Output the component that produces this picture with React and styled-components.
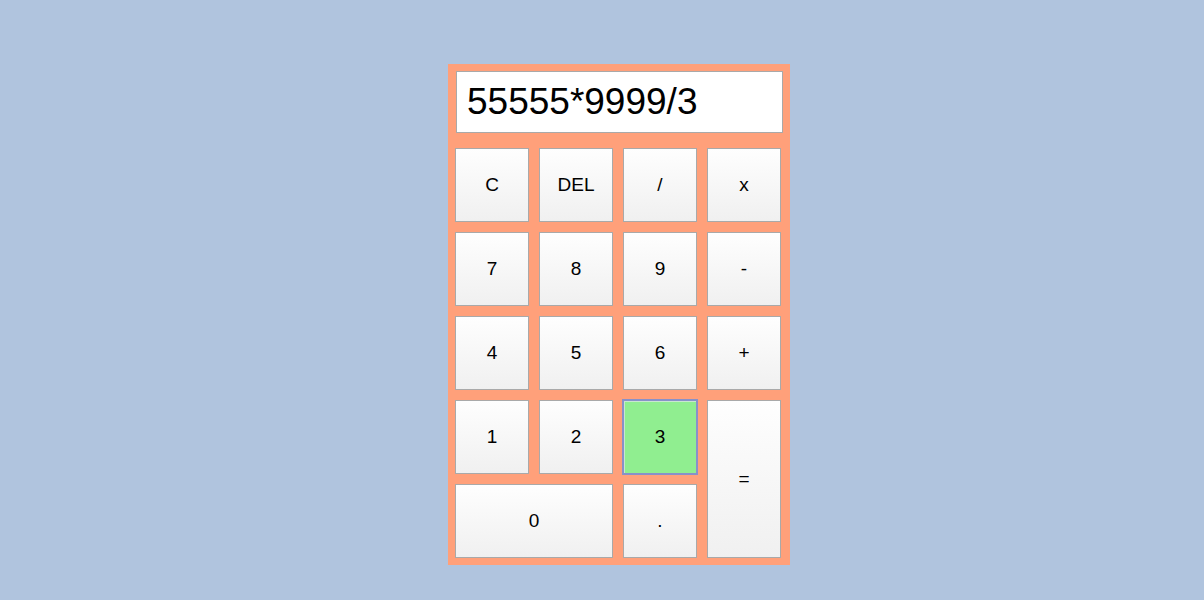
import React from "react";
import styled, { createGlobalStyle, css } from "styled-components";

const GlobalStyle = createGlobalStyle`
  html, body { margin: 0; padding: 0; }
  body {
    background: #b0c4de;
    font-family: "Liberation Sans", Arial, sans-serif;
    min-height: 600px;
  }
`;

const Page = styled.main`
  padding: 64px 0 0 448px;
`;

const Calculator = styled.div`
  width: 342px;
  box-sizing: border-box;
  background: #ffa07a;
  padding: 7px 9px 7px 7px;
`;

const Display = styled.div`
  box-sizing: border-box;
  width: 327px;
  height: 62px;
  margin: 0 0 15px 1px;
  background: #fff;
  border: 1px solid #a9a9a9;
  padding: 0 10px;
  display: flex;
  align-items: center;
  font-size: 37px;
  color: #000;
`;

const Keys = styled.div`
  display: grid;
  grid-template-columns: repeat(4, 74px);
  grid-auto-rows: 74px;
  gap: 10px;
`;

const Key = styled.button`
  box-sizing: border-box;
  border: 1px solid #a9a9a9;
  background: linear-gradient(#fefefe, #f0f0f0);
  font-family: "Liberation Sans", Arial, sans-serif;
  font-size: 19px;
  color: #000;
  padding: 0;
  grid-column: ${(p) => (p.$wide ? "span 2" : "auto")};
  grid-row: ${(p) => (p.$tall ? "span 2" : "auto")};
  ${(p) =>
    p.$active &&
    css`
      background: #90ee90;
      border: 2px solid #8891c9;
      box-shadow: inset 1px 1px 0 #c8e8d0;
      margin: -1px;
      width: calc(100% + 2px);
      height: calc(100% + 2px);
    `}
`;

const keys = [
  { l: "C" }, { l: "DEL" }, { l: "/" }, { l: "x" },
  { l: "7" }, { l: "8" }, { l: "9" }, { l: "-" },
  { l: "4" }, { l: "5" }, { l: "6" }, { l: "+" },
  { l: "1" }, { l: "2" }, { l: "3", active: true }, { l: "=", tall: true },
  { l: "0", wide: true }, { l: "." },
];

export default function App() {
  return (
    <>
      <GlobalStyle />
      <Page>
        <Calculator>
          <Display>55555*9999/3</Display>
          <Keys>
            {keys.map((k) => (
              <Key key={k.l} $wide={k.wide} $tall={k.tall} $active={k.active}>
                {k.l}
              </Key>
            ))}
          </Keys>
        </Calculator>
      </Page>
    </>
  );
}
